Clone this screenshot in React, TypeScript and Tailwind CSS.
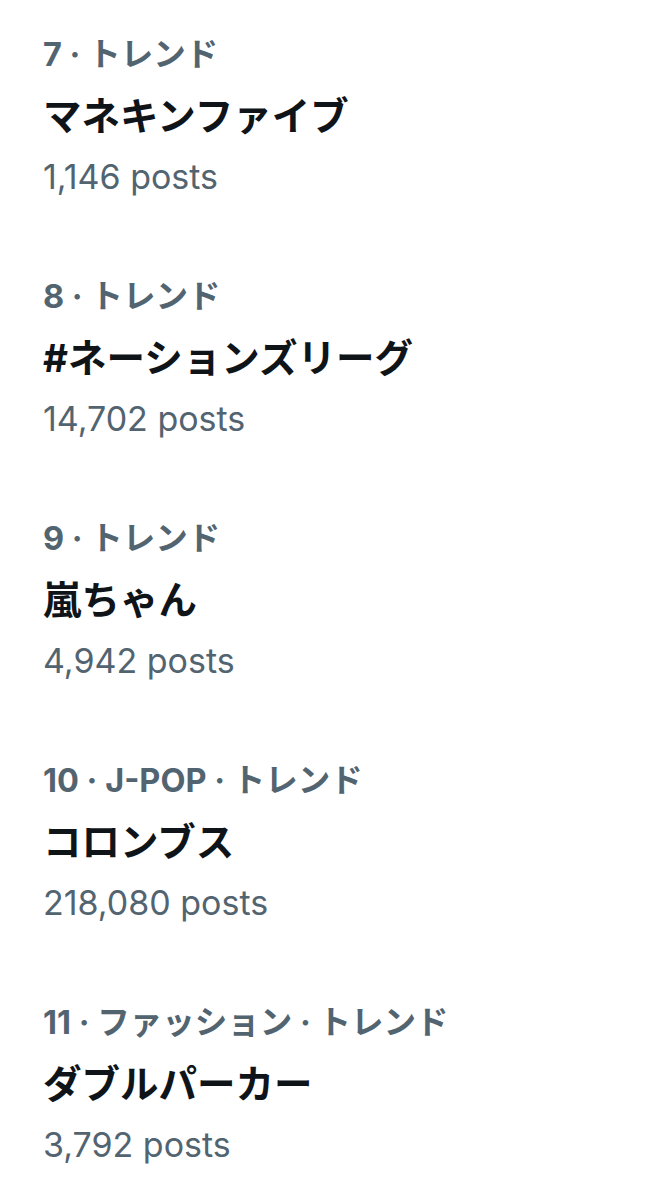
const trends = [
  { meta: "7 · トレンド", name: "マネキンファイブ", posts: "1,146 posts" },
  { meta: "8 · トレンド", name: "#ネーションズリーグ", posts: "14,702 posts" },
  { meta: "9 · トレンド", name: "嵐ちゃん", posts: "4,942 posts" },
  { meta: "10 · J-POP · トレンド", name: "コロンブス", posts: "218,080 posts" },
  { meta: "11 · ファッション · トレンド", name: "ダブルパーカー", posts: "3,792 posts" },
]

function TrendItem({ meta, name, posts }) {
  return (
    <div className="flex flex-col pl-[43px] pt-[25px] pb-[35px]">
      <div className="h-[60px] text-[32.5px] font-bold leading-[60px] text-[#536471]">
        {meta}
      </div>
      <div className="h-[62px] text-[38.5px] font-bold leading-[62px] text-[#0f1419]">
        {name}
      </div>
      <div className="h-[60px] text-[34px] leading-[60px] text-[#536471]">
        {posts}
      </div>
    </div>
  )
}

export default function App() {
  return (
    <div
      className="min-h-[1199px] w-[662px] overflow-hidden bg-white"
      style={{ fontFamily: '"Inter", "Noto Sans CJK JP", sans-serif' }}
    >
      {trends.map((t) => (
        <TrendItem key={t.meta} {...t} />
      ))}
    </div>
  )
}
